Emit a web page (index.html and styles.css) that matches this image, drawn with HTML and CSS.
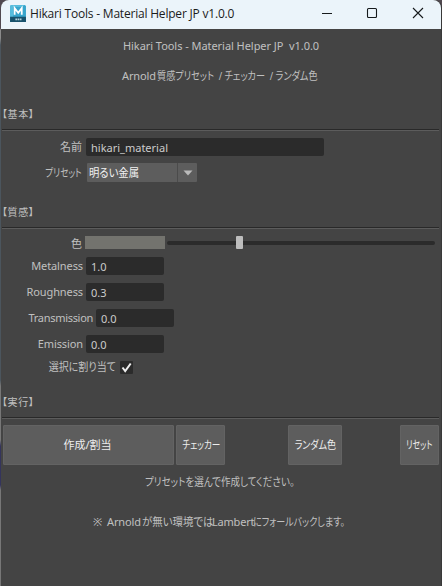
FILE: index.html
```html
<!DOCTYPE html>
<html lang="ja">
<head>
<meta charset="utf-8">
<title>Hikari Tools - Material Helper JP v1.0.0</title>
<link rel="stylesheet" href="styles.css">
</head>
<body>
<div class="window">
  <header class="titlebar">
    <svg class="app-icon" width="17" height="18" viewBox="0 0 16 17">
      <path d="M2 0H15L16 1V16H1V1Z" fill="#37a5cc"/>
      <path d="M2 0H15L12 2H4V11L1 13V1Z" fill="#56bddd"/>
      <path d="M1 11H16V16H1Z" fill="#17526c"/>
      <path d="M5.3 9.3V3L8.7 7.3L12 3V9.3" fill="none" stroke="#fff" stroke-width="1.7"/>
      <path d="M6 13.5H12" stroke="#b5d2dc" stroke-width="1.6" stroke-dasharray="1.6 .5"/>
    </svg>
    <span class="caption">Hikari Tools - Material Helper JP v1.0.0</span>
    <svg class="controls" width="104" height="12" viewBox="0 0 104 12" fill="none" stroke="#161a1c" stroke-width="1.1">
      <path d="M0 6.5H10"/>
      <rect x="45.5" y="1.5" width="9" height="9" rx="1"/>
      <path d="M91 1L101 11M101 1L91 11"/>
    </svg>
  </header>
  <main>
    <p class="heading"><span class="t-head">Hikari Tools - Material Helper JP&nbsp; v1.0.0</span></p>
    <p class="heading sub"><span class="t-arnold">Arnold</span><span class="t-sub"><span class="k">質感プリセット&nbsp; / チェッカー&nbsp; / ランダム色</span></span></p>

    <h2 class="first">【基本】</h2>
    <hr>
    <div class="row name"><label>名前</label><div class="field wide">hikari_material</div></div>
    <div class="row preset"><label><span class="k t-preset">プリセット</span></label>
      <div class="combo"><span class="k t-metal">明るい金属</span><i><svg width="10" height="6"><path d="M0.5 .5H9.5L5 5.5Z" fill="#bbb"/></svg></i></div>
    </div>

    <h2 class="second">【質感】</h2>
    <hr>
    <div class="row color"><label>色</label><div class="swatch"></div><div class="slider"><b></b></div></div>
    <div class="row num"><label>Metalness</label><div class="field">1.0</div></div>
    <div class="row num"><label>Roughness</label><div class="field">0.3</div></div>
    <div class="row num shifted"><label>Transmission</label><div class="field">0.0</div></div>
    <div class="row num"><label>Emission</label><div class="field">0.0</div></div>
    <div class="row assign"><label><span class="k t-assign">選択に割り当て</span></label><svg class="check" width="13" height="13"><path d="M2.5 6.5L5.2 10L10.7 2.5" fill="none" stroke="#eee" stroke-width="2"/></svg></div>

    <h2 class="third">【実行】</h2>
    <hr>
    <div class="buttons">
      <button class="create">作成/割当</button>
      <button class="checker"><span class="k">チェッカー</span></button>
      <button class="random"><span class="k">ランダム色</span></button>
      <button class="reset"><span class="k">リセット</span></button>
    </div>
    <p class="status"><span class="k">プリセットを選んで作成してください。</span></p>
    <p class="note"><span class="t-mark">※</span><span class="t-arnold">Arnold</span><span class="t-n1"><span class="k">が無い環境では</span></span><span class="t-lambert">Lambert</span><span class="t-n2"><span class="k">にフォールバックします。</span></span></p>
  </main>
</div>
</body>
</html>
```
FILE: styles.css
```css
* { box-sizing: border-box; }
body {
  margin: 0;
  width: 442px;
  height: 586px;
  overflow: hidden;
  background: linear-gradient(#514950 0 28px, #8b8b8b 30px 38px, #4b555d 45px 380px, #777 386px 440px, #34345c 446px 485px, #777 490px);
}
.window {
  width: 440px;
  height: 586px;
  margin-left: 1px;
  border-radius: 8px 8px 0 0;
  overflow: hidden;
  background: #444;
  box-shadow: 1px 0 #393939;
  color: #c0c0c0;
  font: 11px/16px "Noto Sans", "Noto Sans CJK JP", sans-serif;
  font-feature-settings: "palt";
  white-space: nowrap;
}
.titlebar {
  display: flex;
  align-items: center;
  height: 29px;
  background: #ebf4fa;
  color: #1b1b1b;
  padding: 0 16px 2px 8px;
}
.app-icon { flex: none; }
.caption { margin-left: 4px; font: 12px/18px "Open Sans", sans-serif; letter-spacing: -0.2px; }
.controls { margin-left: auto; margin-right: -1px; margin-bottom: 1px; }
p, h2, hr { margin: 0; }

/* condensed Japanese runs */
.k { display: inline-block; transform: scaleX(0.78); transform-origin: 0 50%; }

.heading { height: 30px; padding-top: 9px; display: flex; justify-content: center; }
.t-head { letter-spacing: -0.05px; }
.sub { justify-content: flex-start; padding-left: 121px; }
.t-arnold { width: 35px; letter-spacing: -0.1px; }
.t-sub .k { transform: scaleX(0.83); }
h2 { font: 10px/16px "Noto Sans CJK JP", sans-serif; font-feature-settings: "palt"; letter-spacing: 0.6px; padding-left: 1px; height: 23px; }
h2.first { margin-top: 17px; }
h2.second { margin-top: 19px; }
h2.third { margin-top: 17px; }
hr { height: 2px; border: 0; border-top: 1px solid #292929; background: #5c5c5c; margin: 0 2px 0 1px; }
.row { display: flex; align-items: center; height: 26px; }
.row label { width: 81px; text-align: right; flex: none; }
label .k { transform-origin: 100% 50%; }
.field {
  width: 78px;
  height: 18px;
  margin-left: 4px;
  padding-left: 5px;
  border-radius: 2px;
  background: #2b2b2b;
  color: #ccc;
  line-height: 19px;
}
.wide { width: 238px; }
.name { margin-top: 3px; }
.preset { height: 25px; }
.combo { display: flex; justify-content: space-between; width: 110px; height: 19px; margin-left: 5px; border-radius: 1px; background: #5d5d5d; color: #f2f2f2; line-height: 19px; padding-left: 2px; }
.combo .t-metal { transform: scaleX(0.94); }
.combo i { display: flex; align-items: center; justify-content: center; width: 20px; border-left: 1px solid #4b4b4b; }
.color { height: 23px; margin-top: 3px; }
.color label { margin-top: 1px; }
.swatch { width: 80px; height: 13px; margin: 0 2px 2px 3px; background: #73736e; }
.slider { display: flex; align-items: center; width: 268px; height: 4px; margin-bottom: 2px; border-radius: 2px; background: #2b2b2b; padding-left: 69px; }
.slider b { width: 7px; height: 13px; border-radius: 1px; background: #bdbdbd; }
.num label { width: 82px; letter-spacing: -0.1px; }
.num .field { margin-left: 3px; }
.color + .num { margin-top: -2px; }
.num.shifted label { width: 92px; letter-spacing: -0.3px; }
.assign { height: 20px; }
.assign label { width: 115px; }
.assign .t-assign { transform: scaleX(0.91); }
.check { margin-left: 4px; border-radius: 1px; background: #2b2b2b; }
.buttons { display: flex; height: 40px; margin: 6px 2px 0; }
button { height: 40px; padding: 0; border: 1px solid #636363; border-radius: 1px; background: #5d5d5d; color: #eee; font: inherit; font-feature-settings: inherit; }
button .k { transform-origin: 50% 50%; }
.create { width: 171px; padding-right: 2px; }
.checker { width: 49px; margin-left: 2px; }
.random { width: 54px; margin-left: 63px; }
.random .k { transform: scaleX(0.82); }
.reset { width: 39px; margin-left: 58px; }
.reset .k { transform: scaleX(0.72); }
.status { margin-top: 9px; padding-left: 144px; }
.status .k { transform: scaleX(0.865); }
.note { display: flex; margin-top: 24px; padding-left: 92px; }
.note > span { flex: none; }
.t-mark { width: 14px; }
.t-n1 { width: 70px; }
.t-n1 .k { transform: scaleX(0.95); }
.t-lambert { width: 41px; letter-spacing: -0.2px; }
.t-n2 .k { transform: scaleX(0.82); }
```
